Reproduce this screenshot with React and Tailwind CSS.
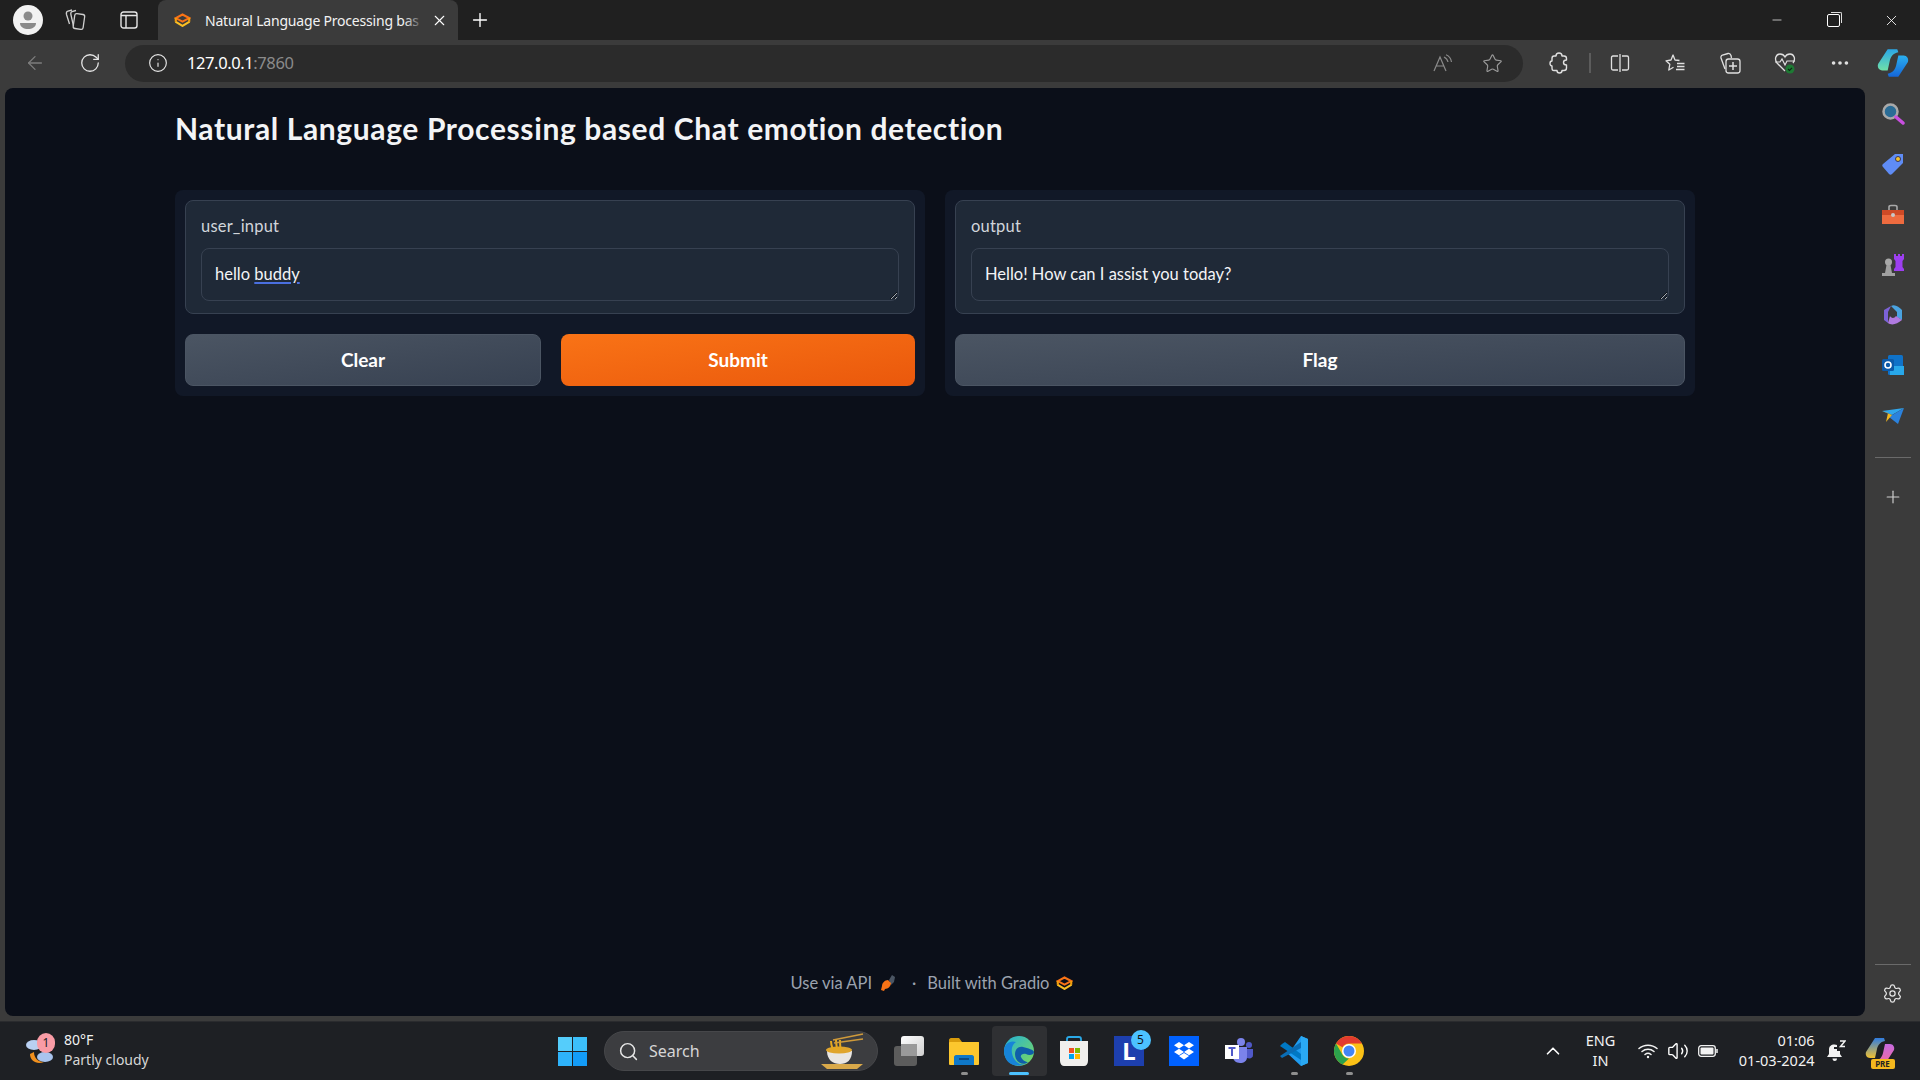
import React from "react";
import { ArrowLeft, RotateCw, Info, Star, MoreHorizontal, Search, Plus, X, Minus, Settings, ChevronUp, Volume2 } from "lucide-react";

// logos and small drawings

function GradioLogo({ size = 16 }) {
  return (
    <svg width={size} height={size * 0.85} viewBox="0 0 24 20" fill="none" strokeWidth="3" strokeLinejoin="miter">
      <path d="M2.500 7 L12 2 L21.500 7 L12 12 Z" stroke="#f97316" />
      <path d="M2 12 L12 18 L22 12" stroke="#fbbf24" />
      <path d="M2.500 7 V12 M21.500 7 V12" stroke="#f59e0b" />
    </svg>
  );
}

function Rocket() {
  return (
    <svg width="16" height="18" viewBox="0 0 16 18">
      <path d="M9 6 L12 1 L15 3 L14 8 L11 11 Z" fill="#4b5563" />
      <path d="M2 12 C2 9 5 6 8 6 L11 9 C11 12 8 15 5 15 L4 17 L1 16 Z" fill="#f97316" />
    </svg>
  );
}

function ProfileIcon() {
  return (
    <div className="w-[30px] h-[30px] rounded-full bg-[#f2f2f2] flex items-center justify-center">
      <svg width="18" height="20" viewBox="0 0 18 20">
        <circle cx="9" cy="6" r="4.500" fill="#8a8a8a" />
        <path d="M1 13 H17 C17 17 13 19 9 19 C5 19 1 17 1 13 Z" fill="#8a8a8a" />
      </svg>
    </div>
  );
}

function CollectionsTabs() {
  return (
    <svg width="22" height="24" viewBox="0 0 22 24" fill="none" stroke="#cfcfcf" strokeWidth="1.300">
      <rect x="10" y="6" width="10" height="15" rx="2" transform="rotate(8 15 13)" />
      <path d="M12 2.500 L8 3.500 C6.500 4 6.500 5 7 7 L9.500 18" />
      <path d="M8 2 L4 3 C2.500 3.500 2 4.500 2.500 6.500 L5.500 16" />
    </svg>
  );
}

function VerticalTabs() {
  return (
    <svg width="18" height="18" viewBox="0 0 18 18" fill="none" stroke="#e6e6e6" strokeWidth="1.400">
      <rect x="1" y="1" width="16" height="16" rx="2.500" />
      <path d="M1 4.500 H17 M6 4.500 V17" />
    </svg>
  );
}

function ReadAloud() {
  return (
    <svg width="20" height="18" viewBox="0 0 20 18" fill="none" stroke="#8b8b8b" strokeWidth="1.200">
      <path d="M1 17 L7 3 L13 17 M3.500 12 H10.500" />
      <path d="M11 3 C13 4 14.500 5.500 15 8 M13 0.800 C16 2 18 4.500 18.500 8" />
    </svg>
  );
}

function Extensions() {
  return (
    <svg width="20" height="22" viewBox="0 0 20 22" fill="none" stroke="#e0e0e0" strokeWidth="1.400" strokeLinejoin="round">
      <path d="M7 4 C7 2 8.500 1 10 1 C11.500 1 13 2 13 4 H15 C16.500 4 17.500 5 17.500 6.500 V8 C16 8 14.500 8.500 14.500 10.500 C14.500 12.500 16 13 17.500 13 V16 C17.500 17.500 16.500 18.500 15 18.500 H13 C13 20 12 21 10.500 21 C9 21 8 20 8 18.500 H5 C3.500 18.500 3 17.500 3 16 V14 C2 14 1 13 1 11.500 C1 10 2 9 3 9 V6.500 C3 5 3.500 4 5 4 Z" />
    </svg>
  );
}

function SplitScreen() {
  return (
    <svg width="20" height="20" viewBox="0 0 20 20" fill="none" stroke="#e0e0e0" strokeWidth="1.300">
      <path d="M8 3 H3 C2 3 1.500 3.500 1.500 4.500 V15.500 C1.500 16.500 2 17 3 17 H8" />
      <path d="M12 3 H17 C18 3 18.500 3.500 18.500 4.500 V15.500 C18.500 16.500 18 17 17 17 H12" />
      <path d="M10 1 V19" />
    </svg>
  );
}

function Favorites() {
  return (
    <svg width="22" height="20" viewBox="0 0 22 20" fill="none" stroke="#e0e0e0" strokeWidth="1.300" strokeLinejoin="round">
      <path d="M15.500 7.500 L11 7 L9 2 L7 7 L2 7.800 L5.800 11.300 L4.800 17 L9.500 14.300" />
      <path d="M13 10.500 H20.500 M13 13.500 H20.500 M12 16.500 H20.500" />
    </svg>
  );
}

function CollectionsPlus() {
  return (
    <svg width="22" height="22" viewBox="0 0 22 22" fill="none" stroke="#e0e0e0" strokeWidth="1.300">
      <path d="M6 17 L2 6 C1.700 4.500 2.200 3.500 3.500 3 L9 1.500 C10.500 1.200 11.500 2 12 3.500 L12.500 6" />
      <rect x="7" y="7" width="14" height="14" rx="2.500" />
      <path d="M14 10 V18 M10 14 H18" strokeWidth="1.500" />
    </svg>
  );
}

function HeartCheck() {
  return (
    <svg width="22" height="22" viewBox="0 0 22 22" fill="none">
      <path d="M11 19 L3 11 C0 7 2 2 6 2 C8 2 10 3 11 5 C12 3 14 2 16 2 C20 2 22 7 19 11" stroke="#e0e0e0" strokeWidth="1.300" />
      <path d="M1 10 H6 L8 7 L11 13 L13 9 H21" stroke="#e0e0e0" strokeWidth="1.200" />
      <circle cx="16" cy="17" r="4.500" fill="#1e7a34" />
      <path d="M14 17 L15.500 18.500 L18 15.800" stroke="#0b2a12" strokeWidth="1.200" />
    </svg>
  );
}

function Copilot({ size = 30, pre = false }) {
  return (
    <svg width={size} height={size} viewBox="0 0 30 30">
      <defs>
        <linearGradient id={pre ? "cpa2" : "cpa"} x1="0" y1="0" x2="0" y2="1">
          <stop offset="0" stopColor={pre ? "#2f7ce0" : "#2aa7e8"} />
          <stop offset="1" stopColor={pre ? "#f2c230" : "#6fe0a8"} />
        </linearGradient>
        <linearGradient id={pre ? "cpb2" : "cpb"} x1="0" y1="0" x2="0" y2="1">
          <stop offset="0" stopColor={pre ? "#c66ae0" : "#2ab0ef"} />
          <stop offset="1" stopColor={pre ? "#f06a9c" : "#1565d8"} />
        </linearGradient>
      </defs>
      <path d="M10 2 H19 L20 5 C15 6 13 9 12 13 L10 22 H5 C2 22 0 19 1 16 Z" fill={`url(#${pre ? "cpa2" : "cpa"})`} />
      <path d="M20 28 H11 L10 25 C15 24 17 21 18 17 L20 8 H25 C28 8 30 11 29 14 Z" fill={`url(#${pre ? "cpb2" : "cpb"})`} />
    </svg>
  );
}

function SideIcon({ name }) {
  if (name === "search")
    return (
      <svg width="24" height="24" viewBox="0 0 24 24" fill="none">
        <circle cx="9.500" cy="9.500" r="7" fill="#2a6c96" stroke="#a9a9a9" strokeWidth="2.500" />
        <path d="M15 15 L22 21" stroke="#c94fe0" strokeWidth="3.500" strokeLinecap="round" />
      </svg>
    );
  if (name === "tag")
    return (
      <svg width="24" height="24" viewBox="0 0 24 24">
        <path d="M14 2 H22 V11 L11 22 C10 23 9 23 8 22 L2 15 C1 14 1 13 2 12 Z" fill="#5f8cf5" />
        <circle cx="17" cy="7" r="2.500" fill="#f2c230" stroke="#33345a" />
      </svg>
    );
  if (name === "toolbox")
    return (
      <svg width="24" height="22" viewBox="0 0 24 22" fill="none">
        <path d="M8 6 V3 C8 2 9 1.500 10 1.500 H14 C15 1.500 16 2 16 3 V6" stroke="#a8a8a8" strokeWidth="1.600" />
        <path d="M1 6 H23 V11 H1 Z" fill="#cf4a26" />
        <path d="M1 11 H23 V20 H1 Z" fill="#ee6b3f" />
        <circle cx="12" cy="11" r="2" fill="#c8c8c8" />
      </svg>
    );
  if (name === "chess")
    return (
      <svg width="24" height="24" viewBox="0 0 24 24">
        <circle cx="7.500" cy="9" r="3.500" fill="#a8a8a8" />
        <path d="M5.500 12 H9.500 L11 20 H14 V23 H1 V20 H4 Z" fill="#a0a0a0" />
        <path d="M13 1 H15 V3 H17 V1 H19 V3 H21 V1 H23 V6 L21.500 8 V14 L23 16 V18 H13 V16 L14.500 14 V8 L13 6 Z" fill="#9d3ff0" />
      </svg>
    );
  if (name === "m365")
    return (
      <svg width="24" height="24" viewBox="0 0 24 24" fill="none">
        <path d="M10 3 L3 7 V17 L7 20 V9 Z" fill="#7c62d8" />
        <path d="M10 3 C14 1 18 4 21 7 V17 L16 14 V9 Z" fill="#4aa3e0" />
        <path d="M7 20 C11 23 16 21 21 17 L15 13 C13 16 10 15 9 13 Z" fill="#b07ae0" />
      </svg>
    );
  if (name === "outlook")
    return (
      <svg width="22" height="21" viewBox="0 0 22 21">
        <rect x="6" y="0" width="15" height="20" rx="1.500" fill="#0f72c8" />
        <path d="M8 11 L22 11 V20 H8 Z" fill="#28a8ea" />
        <rect x="0" y="4" width="12" height="12" rx="1.500" fill="#0c5aa8" />
        <circle cx="6" cy="10" r="3" fill="none" stroke="#fff" strokeWidth="1.600" />
      </svg>
    );
  return (
    <svg width="24" height="18" viewBox="0 0 24 18">
      <path d="M1 4 L23 1 L11 8 Z" fill="#30a6ec" />
      <path d="M23 1 L17 17 L8 10 Z" fill="#2b82dd" />
      <path d="M1 4 L7 6 L5 15 L11 8 Z" fill="#f2b71f" />
    </svg>
  );
}

function WinLogo() {
  return (
    <div className="grid grid-cols-2 gap-[1px] w-[29px] h-[29px]">
      <div className="bg-[#55cdfb]" />
      <div className="bg-[#3cc0fb]" />
      <div className="bg-[#2eb3fb]" />
      <div className="bg-[#139cf8]" />
    </div>
  );
}

function Weather() {
  return (
    <svg width="30" height="30" viewBox="0 0 30 30">
      <path d="M5 18 C5 25 12 29 19 26 C13 26 9 22 9 16 Z" fill="#f0901e" />
      <ellipse cx="20" cy="21" rx="8" ry="5" fill="#a9c4ee" />
      <ellipse cx="9" cy="9" rx="8" ry="5" fill="#b9d0f2" />
    </svg>
  );
}

function Noodles() {
  return (
    <svg width="46" height="36" viewBox="0 0 46 36">
      <path d="M2 31 H44 L38 36 H8 Z" fill="#d9a94a" />
      <path d="M8 18 C8 27 14 31 21 31 C28 31 33 27 33 18 Z" fill="#e9e6e2" />
      <ellipse cx="20" cy="17" rx="13" ry="3.500" fill="#e0a52c" />
      <path d="M12 8 C12 12 13 14 14 17 M17 7 C17 11 18 14 18 17 M21 7 C21 11 21 14 22 17" stroke="#e5a81e" strokeWidth="2" fill="none" />
      <path d="M14 7 L44 1 M15 10 L44 6" stroke="#cf9a3a" strokeWidth="1.600" />
    </svg>
  );
}

function TaskView() {
  return (
    <div className="relative w-[30px] h-[30px]">
      <div className="absolute left-0 bottom-0 w-[23px] h-[20px] rounded-[3px] bg-[#5c5c5c]" />
      <div className="absolute right-0 top-0 w-[23px] h-[20px] rounded-[3px] bg-gradient-to-br from-white to-[#cfcfcf]" />
      <div className="absolute left-[7px] top-[8px] w-[16px] h-[12px] bg-[#9a9a9a]" />
    </div>
  );
}

function Explorer() {
  return (
    <svg width="30" height="27" viewBox="0 0 30 27">
      <path d="M0 2 C0 1 1 0 2 0 H10 L13 4 H30 V10 H0 Z" fill="#d99c0c" />
      <rect x="0" y="4" width="30" height="23" rx="1" fill="#fcc72e" />
      <path d="M5 27 V19 C5 18 6 17 7 17 H23 C24 17 25 18 25 19 V27 Z" fill="#0f78c8" />
      <path d="M10 21 H20" stroke="#083d70" strokeWidth="1.500" />
    </svg>
  );
}

function Edge() {
  return (
    <svg width="30" height="30" viewBox="0 0 30 30">
      <defs>
        <linearGradient id="edgeTop" x1="0" y1="0" x2="1" y2="1">
          <stop offset="0" stopColor="#22b0d8" />
          <stop offset="1" stopColor="#7ddb5a" />
        </linearGradient>
      </defs>
      <circle cx="15" cy="15" r="15" fill="url(#edgeTop)" />
      <path d="M0 15 C0 8 6 4 12 6 C7 9 6 17 11 24 C14 28 20 30 23 27 C18 31 6 31 2 23 C1 21 0 18 0 15 Z" fill="#1784d8" />
      <path d="M11 18 C11 13 15 10 19 11 C24 12 30 14 30 16 C30 19 25 20 22 18 C19 17 16 19 17 21 C18 24 22 26 24 26 C20 30 11 27 11 18 Z" fill="#0f5eaa" />
    </svg>
  );
}

function Store() {
  return (
    <svg width="30" height="30" viewBox="0 0 30 30">
      <path d="M8 6 V3 C8 1 9 1 10 1 H20 C21 1 22 1 22 3 V6" fill="none" stroke="#2aa9e8" strokeWidth="1.800" />
      <path d="M1 5 H29 V25 C29 28 27 30 25 30 H5 C3 30 1 28 1 25 Z" fill="#f0efed" />
      <rect x="10" y="12" width="5" height="5" fill="#f25022" />
      <rect x="16" y="12" width="5" height="5" fill="#7fba00" />
      <rect x="10" y="18" width="5" height="5" fill="#00a4ef" />
      <rect x="16" y="18" width="5" height="5" fill="#ffb900" />
    </svg>
  );
}

function Teams() {
  return (
    <svg width="28" height="26" viewBox="0 0 28 26">
      <circle cx="24" cy="7" r="3" fill="#5059c9" />
      <circle cx="16" cy="4" r="4" fill="#7b83eb" />
      <path d="M8 9 H22 V19 C22 23 19 25 15 25 C11 25 8 22 8 19 Z" fill="#7b83eb" />
      <path d="M22 11 H28 V17 C28 20 25 21 22 20 Z" fill="#5059c9" />
      <rect x="0" y="7" width="14" height="14" fill="#fff" />
      <path d="M3.500 10 H10.500 M7 10 V18" stroke="#5059c9" strokeWidth="2" />
    </svg>
  );
}

function VsCode() {
  return (
    <svg width="30" height="30" viewBox="0 0 30 30">
      <path d="M22 0 L29 3 V27 L22 30 L8 17 L13 13 Z" fill="#1f9cf0" />
      <path d="M22 0 L22 30 L29 27 V3 Z" fill="#2aa9f3" />
      <path d="M3 8 L1 10 L22 24 V18 L6 6 Z" fill="#0078c4" />
      <path d="M1 20 L3 22 L22 12 V6 Z" fill="#0a6db5" />
    </svg>
  );
}

function Chrome() {
  return (
    <svg width="30" height="30" viewBox="0 0 30 30">
      <circle cx="15" cy="15" r="15" fill="#fbc116" />
      <path d="M15 0 A15 15 0 0 1 28 7.500 H15 A7.500 7.500 0 0 0 8.500 11.200 L2 7.500 A15 15 0 0 1 15 0 Z" fill="#e33b2e" />
      <path d="M2 7.500 L8.500 18.800 A7.500 7.500 0 0 0 15 22.500 L8.500 28.500 A15 15 0 0 1 2 7.500 Z" fill="#2ca24c" />
      <circle cx="15" cy="15" r="7" fill="#fff" />
      <circle cx="15" cy="15" r="5.500" fill="#4285f4" />
    </svg>
  );
}

function WifiTray() {
  return (
    <svg width="20" height="16" viewBox="0 0 20 16" fill="none" stroke="#f2f2f2" strokeWidth="1.500" strokeLinecap="round">
      <path d="M1 5.500 C6 1 14 1 19 5.500 M4 8.500 C7.500 5.500 12.500 5.500 16 8.500 M7 11.500 C8.800 10 11.200 10 13 11.500" />
      <circle cx="10" cy="14" r="1.200" fill="#f2f2f2" stroke="none" />
    </svg>
  );
}

function BatteryTray() {
  return (
    <svg width="20" height="12" viewBox="0 0 20 12" fill="none">
      <rect x="0.700" y="0.700" width="16.600" height="10.600" rx="2.500" stroke="#f2f2f2" strokeWidth="1.300" />
      <rect x="2.500" y="2.500" width="13" height="7" rx="1" fill="#f2f2f2" />
      <path d="M19 4 V8" stroke="#f2f2f2" strokeWidth="1.500" />
    </svg>
  );
}

function Bell() {
  return (
    <svg width="20" height="22" viewBox="0 0 20 22" fill="#f2f2f2">
      <path d="M1 17 L3 14 V9.500 C3 6.500 5 4.500 8.500 4.500 C9.500 4.500 10.500 4.700 11 5 V7 H8 V9 L11 9 V11 H14 L14 14 L16 17 Z" />
      <path d="M6.500 18.500 H11 C11 20.200 10 21 8.800 21 C7.500 21 6.500 20.200 6.500 18.500 Z" />
      <path d="M14 1 H19 L14.500 6.500 H19" fill="none" stroke="#f2f2f2" strokeWidth="1.500" />
    </svg>
  );
}

function TaskSlot({ children, pip, active, badge }) {
  return (
    <div className={"relative w-[55px] h-[50px] flex items-center justify-center rounded-[4px] " + (active ? "bg-[#2f3033]" : "")}>
      {children}
      {badge && (
        <span className="absolute top-[4px] right-[6px] w-[20px] h-[20px] rounded-full bg-[#4cc2ff] text-[#111] text-[12px] flex items-center justify-center">
          {badge}
        </span>
      )}
      {pip && <span className="absolute bottom-[1px] w-[7px] h-[3px] rounded-full bg-[#8f8f8f]" />}
      {active && <span className="absolute bottom-[1px] w-[20px] h-[3px] rounded-full bg-[#4cc2ff]" />}
    </div>
  );
}

function FormBlock({ label, children }) {
  return (
    <div className="h-[114px] rounded-[8px] border border-[#374151] bg-[#1f2937] px-[15px] pt-[15px]">
      <div className="h-[20px] leading-[20px] text-[16.500px] tracking-[0.2px] text-[#d1d5db]">{label}</div>
      <div className="mt-[12px] h-[53px] rounded-[8px] border border-[#374151] px-[13px] py-[14px] text-[16.500px] leading-[22px] text-[#f3f4f6] resize-y overflow-auto">
        {children}
      </div>
    </div>
  );
}

function GrayButton({ className, children }) {
  return (
    <div className={"h-[52px] rounded-[8px] border border-[#4b5563] bg-gradient-to-br from-[#4b5563] to-[#374151] flex items-center justify-center text-[19px] font-bold text-white " + className}>
      {children}
    </div>
  );
}

export default function App() {
  const sideIcons = ["search", "tag", "toolbox", "chess", "m365", "outlook", "send"];
  return (
    <div className="w-[1920px] h-[1080px] overflow-hidden flex flex-col bg-[#3b3b3b] font-['Noto_Sans',sans-serif]">
      {/* title bar */}
      <div className="h-10 shrink-0 bg-[#202020] flex items-center">
        <div className="ml-[13px]"><ProfileIcon /></div>
        <div className="ml-[21px]"><CollectionsTabs /></div>
        <div className="ml-[34px]"><VerticalTabs /></div>
        <div className="ml-[20px] self-end h-10 w-[300px] rounded-t-[8px] bg-[#3b3b3b] flex items-center pl-[16px] relative">
          <GradioLogo size={17} />
          <span className="ml-[14px] w-[216px] overflow-hidden whitespace-nowrap text-[14px] tracking-[-0.2px] text-[#f2f2f2]">
            Natural Language Processing bas
          </span>
          <X className="ml-[10px] w-[17px] h-[17px] text-white" strokeWidth={1.5} />
          <div className="absolute left-[246px] top-0 w-[20px] h-full bg-gradient-to-r from-transparent to-[#3b3b3b]" />
        </div>
        <Plus className="ml-[11px] w-[22px] h-[22px] text-white" strokeWidth={1.5} />
        <div className="ml-auto flex items-center">
          <Minus className="w-[14px] h-[14px] text-white" strokeWidth={1.2} />
          <div className="ml-[43px] relative w-[13px] h-[13px] border border-white rounded-[2px]">
            <div className="absolute -top-[3px] -right-[3px] w-[11px] h-[11px] border-t border-r border-[#ddd] rounded-tr-[2px]" />
          </div>
          <X className="ml-[43px] mr-[20px] w-[17px] h-[17px] text-white" strokeWidth={1.2} />
        </div>
      </div>

      {/* toolbar */}
      <div className="h-12 shrink-0 flex items-center pb-[2px]">
        <ArrowLeft className="ml-[24px] w-[22px] h-[22px] text-[#7d7d7d]" strokeWidth={1.4} />
        <RotateCw className="ml-[33px] w-[22px] h-[22px] text-[#e6e6e6]" strokeWidth={1.4} />
        <div className="ml-[24px] w-[1398px] h-[37px] rounded-full bg-[#2b2b2b] flex items-center pl-[23px] pr-[20px]">
          <Info className="w-[20px] h-[20px] text-[#e6e6e6]" strokeWidth={1.4} />
          <span className="ml-[19px] text-[16.500px] tracking-[-0.4px] text-white">
            127.0.0.1<span className="text-[#8a8a8a]">:7860</span>
          </span>
          <div className="ml-auto"><ReadAloud /></div>
          <Star className="ml-[29px] w-[21px] h-[21px] text-[#9a9a9a]" strokeWidth={1.3} />
        </div>
        <div className="ml-[26px]"><Extensions /></div>
        <div className="ml-[20px] w-[2px] h-[20px] bg-[#5c5c5c]" />
        <div className="ml-[19px]"><SplitScreen /></div>
        <div className="ml-[34px]"><Favorites /></div>
        <div className="ml-[33px]"><CollectionsPlus /></div>
        <div className="ml-[33px]"><HeartCheck /></div>
        <MoreHorizontal className="ml-[33px] w-[22px] h-[22px] text-[#e0e0e0]" strokeWidth={2} />
        <div className="ml-[26px]"><Copilot size={32} /></div>
      </div>

      {/* page + edge sidebar */}
      <div className="flex-1 min-h-0 flex pl-[5px]">
        <main className="w-[1860px] rounded-[8px] bg-[#0b0f19] flex flex-col px-[170px] font-['Lato',sans-serif]">
          <h1 className="mt-[20px] h-[40px] leading-[40px] text-[30px] font-bold tracking-[0.62px] text-[#f3f4f6] whitespace-nowrap">
            Natural Language Processing based Chat emotion detection
          </h1>
          <div className="mt-[42px] flex gap-5">
            <section className="w-[750px] h-[206px] rounded-[8px] bg-[#111827] p-[10px] flex flex-col gap-5">
              <FormBlock label="user_input">
                hello <span className="underline decoration-[#4a6fe0] decoration-2 underline-offset-2">buddy</span>
              </FormBlock>
              <div className="flex gap-5">
                <GrayButton className="flex-1">Clear</GrayButton>
                <div className="flex-1 h-[52px] rounded-[8px] bg-gradient-to-br from-[#f97316] to-[#ea580c] flex items-center justify-center text-[19px] font-bold text-white">
                  Submit
                </div>
              </div>
            </section>
            <section className="w-[750px] h-[206px] rounded-[8px] bg-[#111827] p-[10px] flex flex-col gap-5">
              <FormBlock label="output">Hello! How can I assist you today?</FormBlock>
              <GrayButton className="w-full">Flag</GrayButton>
            </section>
          </div>
          <footer className="mt-auto mb-[22px] flex items-center justify-center text-[16.500px] leading-[22px] text-[#9ca3af] -translate-x-[3px]">
            <span>Use via API</span>
            <span className="ml-[8px]"><Rocket /></span>
            <span className="ml-[16px]">·</span>
            <span className="ml-[11px]">Built with Gradio</span>
            <span className="ml-[7px]"><GradioLogo size={17} /></span>
          </footer>
        </main>
        <aside className="flex-1 flex flex-col items-center pt-[1px] pb-[12px]">
          <div className="flex flex-col items-center">
            {sideIcons.map((name) => (
              <div key={name} className="w-full h-[50.300px] flex items-center justify-center">
                <SideIcon name={name} />
              </div>
            ))}
          </div>
          <div className="mt-[16px] w-[36px] h-px bg-[#6a6a6a]" />
          <Plus className="mt-[29px] w-[20px] h-[20px] text-[#cfcfcf]" strokeWidth={1.4} />
          <div className="mt-auto w-[36px] h-px bg-[#6a6a6a]" />
          <Settings className="mt-[18px] w-[21px] h-[21px] text-[#e6e6e6]" strokeWidth={1.4} />
        </aside>
      </div>

      {/* windows taskbar */}
      <div className="mt-[5px] h-[59px] shrink-0 bg-[#1e2024] border-t border-[#2a2b2e] flex items-center text-[#f2f2f2]">
        <div className="w-[558px] flex items-center pl-[25px]">
          <div className="relative">
            <Weather />
            <span className="absolute -top-[3px] left-[12px] w-[18px] h-[20px] rounded-full bg-[#f99ca6] text-[#222] text-[12px] flex items-center justify-center">1</span>
          </div>
          <div className="ml-[9px] text-[14px] leading-[20px] -mt-[3px]">
            <div>80°F</div>
            <div className="text-[#d6d6d6]">Partly cloudy</div>
          </div>
        </div>
        <WinLogo />
        <div className="ml-[17px] w-[274px] h-[40px] rounded-full bg-[#3c3d40] border border-[#46474a] flex items-center pl-[13px]">
          <Search className="w-[21px] h-[21px] text-[#e6e6e6]" strokeWidth={1.7} />
          <span className="ml-[10px] text-[16px] text-[#d6d6d6]">Search</span>
          <div className="ml-auto mr-[12px]"><Noodles /></div>
        </div>
        <div className="ml-[3.500px] flex items-center">
          <TaskSlot><TaskView /></TaskSlot>
          <TaskSlot pip><Explorer /></TaskSlot>
          <TaskSlot active><Edge /></TaskSlot>
          <TaskSlot><Store /></TaskSlot>
          <TaskSlot badge="5">
            <div className="w-[30px] h-[30px] bg-[#1d3fae] flex items-center justify-center text-white text-[24px] font-bold">L</div>
          </TaskSlot>
          <TaskSlot>
            <div className="w-[30px] h-[30px] bg-[#0061fe] flex items-center justify-center">
              <svg width="20" height="18" viewBox="0 0 20 18" fill="#fff">
                <path d="M5 0 L10 3.200 L5 6.400 L0 3.200 Z M15 0 L20 3.200 L15 6.400 L10 3.200 Z M5 6.800 L10 10 L5 13.200 L0 10 Z M15 6.800 L20 10 L15 13.200 L10 10 Z M5 14 L10 11 L15 14 L10 17.500 Z" />
              </svg>
            </div>
          </TaskSlot>
          <TaskSlot><Teams /></TaskSlot>
          <TaskSlot pip><VsCode /></TaskSlot>
          <TaskSlot pip><Chrome /></TaskSlot>
        </div>
        <ChevronUp className="ml-[165px] w-[22px] h-[22px] text-white" strokeWidth={1.8} />
        <div className="ml-[21px] w-[32px] text-center text-[14.500px] leading-[20px] -mt-[2px]">
          <div>ENG</div>
          <div>IN</div>
        </div>
        <div className="ml-[21px]"><WifiTray /></div>
        <Volume2 className="ml-[9px] w-[22px] h-[22px] text-white" strokeWidth={1.5} />
        <div className="ml-[9px]"><BatteryTray /></div>
        <div className="w-[97px] text-right text-[14.500px] leading-[20px] -mt-[2px]">
          <div>01:06</div>
          <div>01-03-2024</div>
        </div>
        <div className="ml-[11px]"><Bell /></div>
        <div className="relative ml-[19px]">
          <Copilot size={30} pre />
          <span className="absolute -bottom-[3px] left-[6px] w-[24px] h-[10px] rounded-[2px] bg-[#f5b81e] text-[#222] text-[8px] font-bold leading-[10px] text-center">PRE</span>
        </div>
      </div>
    </div>
  );
}
